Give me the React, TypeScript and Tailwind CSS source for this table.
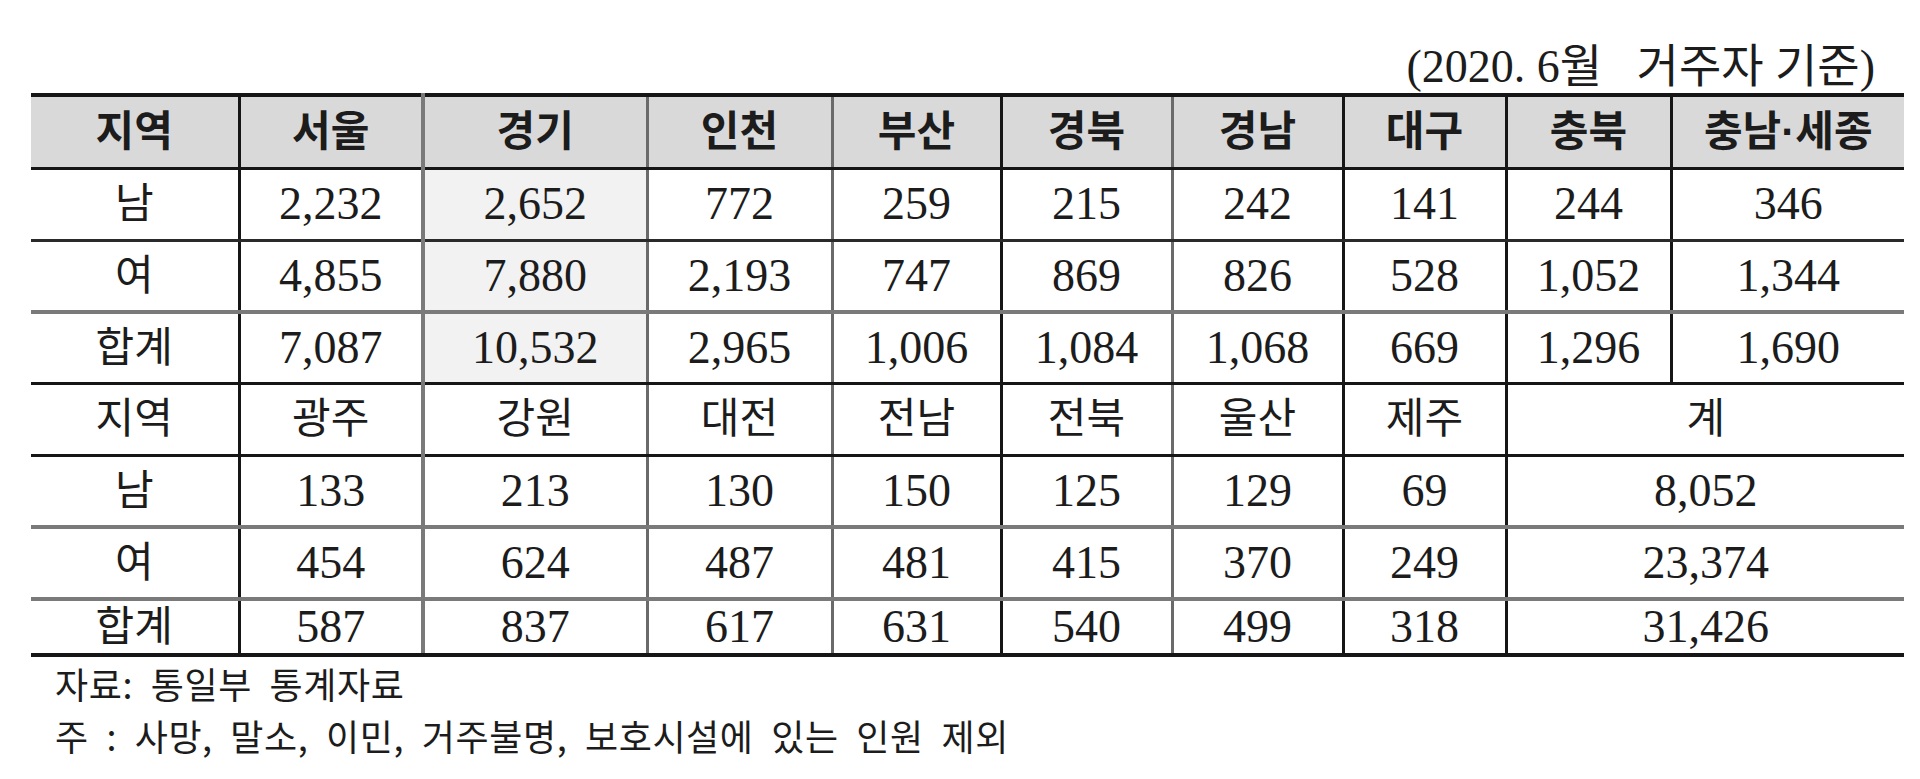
import React from 'react';

type RowKind = 'head' | 'label' | 'data';

type TableRow = {
    kind: RowKind;
    cells: string[];
    height: string;
    line: string;
    span?: boolean;
};

// widths of the 10 columns, measured from the scan
const colWidths = [208, 184, 224, 185, 169, 171, 171, 163, 165, 233];

// vertical rule on the right side of each column
const colLine = [
    'border-r-[3px] border-r-[#161616]',
    'border-r-[4px] border-r-[#7a7a7a]',
    'border-r-[3px] border-r-[#6a6a6a]',
    'border-r-[3px] border-r-[#6a6a6a]',
    'border-r-[3px] border-r-[#161616]',
    'border-r-[3px] border-r-[#6a6a6a]',
    'border-r-[3px] border-r-[#161616]',
    'border-r-[3px] border-r-[#161616]',
    'border-r-[3px] border-r-[#161616]',
    '',
];

const serif = "font-['Liberation_Serif','Noto_Sans_CJK_KR',serif] text-[46px] leading-none font-normal";
const sans = "font-['Liberation_Sans','Noto_Sans_CJK_KR',sans-serif] text-[42px] leading-none";

const rows: TableRow[] = [
    {
        kind: 'head',
        cells: ['지역', '서울', '경기', '인천', '부산', '경북', '경남', '대구', '충북', '충남·세종'],
        height: 'h-[73px]',
        line: 'border-t-[4px] border-t-[#161616] border-b-[3px] border-b-[#161616]',
    },
    {
        kind: 'data',
        cells: ['남', '2,232', '2,652', '772', '259', '215', '242', '141', '244', '346'],
        height: 'h-[72px]',
        line: 'border-b-[3px] border-b-[#2a2a2a]',
    },
    {
        kind: 'data',
        cells: ['여', '4,855', '7,880', '2,193', '747', '869', '826', '528', '1,052', '1,344'],
        height: 'h-[72px]',
        line: 'border-b-[4px] border-b-[#7a7a7a]',
    },
    {
        kind: 'data',
        cells: ['합계', '7,087', '10,532', '2,965', '1,006', '1,084', '1,068', '669', '1,296', '1,690'],
        height: 'h-[71px]',
        line: 'border-b-[3px] border-b-[#161616]',
    },
    {
        kind: 'label',
        cells: ['지역', '광주', '강원', '대전', '전남', '전북', '울산', '제주', '계'],
        height: 'h-[72px]',
        line: 'border-b-[3px] border-b-[#161616]',
        span: true,
    },
    {
        kind: 'data',
        cells: ['남', '133', '213', '130', '150', '125', '129', '69', '8,052'],
        height: 'h-[72px]',
        line: 'border-b-[4px] border-b-[#7a7a7a]',
        span: true,
    },
    {
        kind: 'data',
        cells: ['여', '454', '624', '487', '481', '415', '370', '249', '23,374'],
        height: 'h-[72px]',
        line: 'border-b-[4px] border-b-[#7a7a7a]',
        span: true,
    },
    {
        kind: 'data',
        cells: ['합계', '587', '837', '617', '631', '540', '499', '318', '31,426'],
        height: 'h-[56px]',
        line: 'border-b-[4px] border-b-[#161616]',
        span: true,
    },
];

function cellFont(kind: RowKind, index: number) {
    if (kind === 'head') return `${sans} font-bold`;
    if (kind === 'label' || index === 0) return `${sans} font-normal`;
    return serif;
}

export default function App() {
    return (
        <div className="min-h-[779px] w-[1920px] bg-white text-[#1c1c1c]">
            <div className="w-[1904px] pl-[31px] pt-[44px]">
                {/* unit / reference date */}
                <div className={`h-[46px] whitespace-pre pr-[29px] text-right ${serif}`}>
                    (2020. 6월   거주자 기준)
                </div>

                <table className="mt-[3px] w-[1873px] table-fixed border-collapse">
                    <colgroup>
                        {colWidths.map((w, i) => (
                            <col key={i} style={{ width: w }} />
                        ))}
                    </colgroup>
                    <tbody>
                        {rows.map((row, r) => (
                            <tr key={r} className={row.height}>
                                {row.cells.map((text, i) => {
                                    const last = row.span && i === row.cells.length - 1;
                                    const shaded =
                                        row.kind === 'head'
                                            ? 'bg-[#d9d9d9]'
                                            : r <= 3 && i === 2
                                              ? 'bg-[#f2f2f2]'
                                              : '';
                                    return (
                                        <td
                                            key={i}
                                            colSpan={last ? 2 : 1}
                                            className={`p-0 text-center align-middle ${row.line} ${
                                                last ? '' : colLine[i]
                                            } ${shaded} ${cellFont(row.kind, i)}`}
                                        >
                                            {text}
                                        </td>
                                    );
                                })}
                            </tr>
                        ))}
                    </tbody>
                </table>

                {/* source and footnote */}
                <div className="pl-[24px] font-['Noto_Sans_CJK_KR',sans-serif] text-[36px] leading-[52px] whitespace-pre tracking-[0.6px] [word-spacing:9px]">
                    <p>자료: 통일부 통계자료</p>
                    <p>주 : 사망, 말소, 이민, 거주불명, 보호시설에 있는 인원 제외</p>
                </div>
            </div>
        </div>
    );
}
